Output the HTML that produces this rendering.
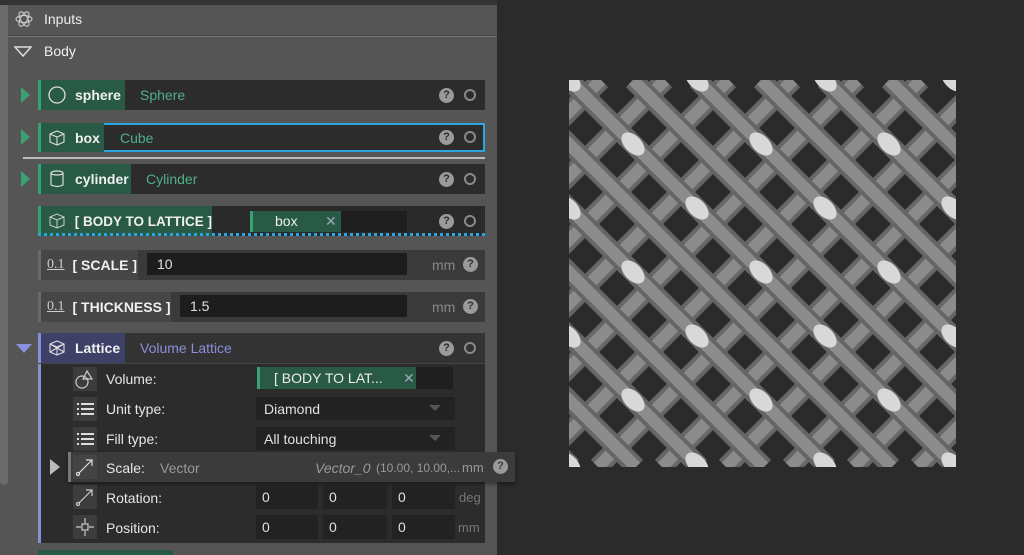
<!DOCTYPE html>
<html><head><meta charset="utf-8"><style>
*{margin:0;padding:0;box-sizing:border-box}
body{width:1024px;height:555px;overflow:hidden;background:#2b2b2b;font-family:"Liberation Sans",sans-serif;font-size:14px;color:#e8e8e8;position:relative}
.a{position:absolute}
.row{position:absolute;left:38px;width:447px;background:#2c2c2c}
.lbl{position:absolute;left:0;top:0;bottom:0;display:flex;align-items:center;font-weight:bold;color:#f0f0f0;white-space:nowrap}
.g{background:#285a45;border-left:3px solid #3aa175}
.gr{background:#464646;border-left:3px solid #6a6a6a}
.q{position:absolute;width:15px;height:15px;border-radius:50%;background:#9a9a9a;color:#2c2c2c;font-size:11px;font-weight:bold;text-align:center;line-height:15px}
.o{position:absolute;width:12px;height:12px;border-radius:50%;border:2px solid #8a8a8a}
.tri{position:absolute;width:0;height:0;border-top:8px solid transparent;border-bottom:8px solid transparent;border-left:9px solid #3aa175}
.in{position:absolute;background:#1d1d1d;color:#e0e0e0;display:flex;align-items:center;padding-left:10px}
.ic{position:absolute;width:24px;height:24px;background:#3c3c3c}
.sl{position:absolute;left:106px;color:#e6e6e6}
</style></head><body>
<div class="a" style="left:0;top:0;width:497px;height:555px;background:#555"></div>
<div class="a" style="left:0;top:0;width:497px;height:5px;background:#333"></div>
<div class="a" style="left:0;top:5px;width:8px;height:480px;background:#6b6b6b;border-radius:0 0 4px 4px"></div>
<div class="a" style="left:8px;top:36px;width:489px;height:1px;background:#777"></div>
<div class="a" style="left:8px;top:35px;width:489px;height:1px;background:#444"></div>
<svg class="a" style="left:14px;top:9px" width="20" height="20" viewBox="0 0 20 20" fill="none" stroke="#ccc" stroke-width="1.1"><ellipse cx="10" cy="10" rx="8" ry="3.5"/><ellipse cx="10" cy="10" rx="8" ry="3.5" transform="rotate(60 10 10)"/><ellipse cx="10" cy="10" rx="8" ry="3.5" transform="rotate(120 10 10)"/></svg>
<div class="a" style="left:44px;top:11px;color:#eee">Inputs</div>
<svg class="a" style="left:14px;top:46px" width="18" height="12"><path d="M1 1H17L9 10Z" fill="none" stroke="#ddd" stroke-width="1.5"/></svg>
<div class="a" style="left:44px;top:43px;color:#eee">Body</div>

<div class="tri" style="left:21px;top:87px"></div>
<div class="row" style="top:80px;height:30px"><div class="lbl g" style="width:87px"><svg style="margin-left:6px" width="20" height="20"><circle cx="10" cy="10" r="8" fill="none" stroke="#ddd" stroke-width="1.3"/></svg><span style="margin-left:8px">sphere</span></div><div class="a" style="left:102px;top:7px;color:#4fb08a">Sphere</div><div class="q" style="left:401px;top:8px">?</div><div class="o" style="left:426px;top:9px"></div></div>
<div class="tri" style="left:21px;top:129px"></div>
<div class="row" style="top:123px;height:29px;border:2px solid #2aa7e2"><div class="lbl g" style="width:66px;left:-2px;top:-2px;bottom:-2px"><svg style="margin-left:6px" width="20" height="20" fill="none" stroke="#ddd" stroke-width="1.1"><path d="M3 6L10 3L17 6V14L10 17L3 14Z M3 6L10 9L17 6 M10 9V17"/></svg><span style="margin-left:8px">box</span></div><div class="a" style="left:80px;top:5px;color:#4fb08a">Cube</div><div class="q" style="left:399px;top:5px">?</div><div class="o" style="left:424px;top:6px"></div></div>
<div class="a" style="left:23px;top:157px;width:462px;height:2px;background:#bbb"></div>
<div class="tri" style="left:21px;top:171px"></div>
<div class="row" style="top:164px;height:30px"><div class="lbl g" style="width:93px"><svg style="margin-left:6px" width="20" height="20" fill="none" stroke="#ddd" stroke-width="1.2"><ellipse cx="10" cy="4" rx="6" ry="2"/><path d="M4 4V16Q10 19 16 16V4"/></svg><span style="margin-left:8px">cylinder</span></div><div class="a" style="left:108px;top:7px;color:#4fb08a">Cylinder</div><div class="q" style="left:401px;top:8px">?</div><div class="o" style="left:426px;top:9px"></div></div>
<div class="row" style="top:206px;height:30px;background:#2a2a2a"><div class="lbl g" style="width:174px"><svg style="margin-left:6px" width="20" height="20" fill="none" stroke="#ccc" stroke-width="1"><path d="M3 6L10 3L17 6V14L10 17L3 14Z M3 6L10 9L17 6 M10 9V17"/></svg><span style="margin-left:8px;font-size:13.5px">[ BODY TO LATTICE ]</span></div>
<div class="a" style="left:212px;top:5px;width:157px;height:21px;background:#1f1f1f"></div>
<div class="a" style="left:212px;top:5px;width:91px;height:21px;background:#285a45;border-left:3px solid #3aa175;color:#eee;padding-left:22px;line-height:21px">box<span style="position:absolute;left:72px;color:#9ab">✕</span></div>
<div class="q" style="left:401px;top:8px">?</div><div class="o" style="left:426px;top:9px"></div>
<div class="a" style="left:0;top:27px;width:447px;height:0;border-top:3px dotted #2aa7e2"></div></div>
<div class="row" style="top:250px;height:30px;background:#3a3a3a"><div class="lbl gr" style="width:100px"><span style="margin-left:6px;font-family:'Liberation Serif';color:#ccc;font-weight:normal;text-decoration:underline">0.1</span><span style="margin-left:8px">[ SCALE ]</span></div><div class="in" style="left:109px;top:3px;width:260px;height:22px">10</div><div class="a" style="left:394px;top:7px;color:#888">mm</div><div class="q" style="left:425px;top:7px">?</div></div>
<div class="row" style="top:292px;height:30px;background:#3a3a3a"><div class="lbl gr" style="width:133px"><span style="margin-left:6px;font-family:'Liberation Serif';color:#ccc;font-weight:normal;text-decoration:underline">0.1</span><span style="margin-left:8px">[ THICKNESS ]</span></div><div class="in" style="left:142px;top:3px;width:227px;height:22px">1.5</div><div class="a" style="left:394px;top:7px;color:#888">mm</div><div class="q" style="left:425px;top:7px">?</div></div>
<svg class="a" style="left:16px;top:344px" width="16" height="10"><path d="M0 0H16L8 9Z" fill="#8a8fe0"/></svg>
<div class="row" style="top:333px;height:30px;background:#333"><div class="lbl" style="width:87px;background:#3d4168;border-left:3px solid #8a8fd8"><svg style="margin-left:6px" width="20" height="20" fill="none" stroke="#ddd" stroke-width="1.1"><path d="M3 6L10 3L17 6V14L10 17L3 14Z M3 6L10 9L17 6 M10 9V17 M3 6L17 14 M17 6L3 14"/></svg><span style="margin-left:8px">Lattice</span></div><div class="a" style="left:102px;top:7px;color:#8a8fd8">Volume Lattice</div><div class="q" style="left:401px;top:8px">?</div><div class="o" style="left:426px;top:9px"></div></div>
<div class="a" style="left:38px;top:363px;width:447px;height:180px;background:#2c2c2c;border-left:3px solid #8a8fd0"></div>
<div class="a" style="left:38px;top:363px;width:447px;height:1px;background:#444"></div>

<div class="ic" style="left:73px;top:367px"></div><svg class="a" style="left:73px;top:367px" width="24" height="24" fill="none" stroke="#ccc" stroke-width="1.2"><circle cx="9" cy="15" r="6"/><path d="M14 4L19 12H10Z"/></svg>
<div class="sl" style="top:371px">Volume:</div>
<div class="a" style="left:257px;top:367px;width:196px;height:22px;background:#1f1f1f"></div>
<div class="a" style="left:257px;top:367px;width:159px;height:22px;background:#285a45;border-left:3px solid #3aa175;padding-left:14px;line-height:22px;color:#eee">[ BODY TO LAT...<span style="position:absolute;left:143px;color:#9ab">✕</span></div>

<div class="ic" style="left:73px;top:397px"></div><svg class="a" style="left:77px;top:402px" width="18" height="14" fill="#ddd"><rect x="0" y="1" width="2" height="2"/><rect x="4" y="1" width="13" height="2"/><rect x="0" y="6" width="2" height="2"/><rect x="4" y="6" width="13" height="2"/><rect x="0" y="11" width="2" height="2"/><rect x="4" y="11" width="13" height="2"/></svg>
<div class="sl" style="top:401px">Unit type:</div>
<div class="in" style="left:256px;top:397px;width:199px;height:23px;background:#222;padding-left:8px">Diamond</div>
<svg class="a" style="left:429px;top:405px" width="12" height="6"><path d="M0 0H12L6 6Z" fill="#555"/></svg>

<div class="ic" style="left:73px;top:427px"></div><svg class="a" style="left:77px;top:432px" width="18" height="14" fill="#ddd"><rect x="0" y="1" width="2" height="2"/><rect x="4" y="1" width="13" height="2"/><rect x="0" y="6" width="2" height="2"/><rect x="4" y="6" width="13" height="2"/><rect x="0" y="11" width="2" height="2"/><rect x="4" y="11" width="13" height="2"/></svg>
<div class="sl" style="top:431px">Fill type:</div>
<div class="in" style="left:256px;top:427px;width:199px;height:23px;background:#222;padding-left:8px">All touching</div>
<svg class="a" style="left:429px;top:435px" width="12" height="6"><path d="M0 0H12L6 6Z" fill="#555"/></svg>

<div class="a" style="left:68px;top:452px;width:447px;height:30px;background:#3b3b3b;border-left:3px solid #777;box-shadow:0 2px 4px rgba(0,0,0,.4)"></div>
<svg class="a" style="left:50px;top:459px" width="10" height="16"><path d="M0 0L10 8L0 16Z" fill="#bbb"/></svg>
<div class="ic" style="left:73px;top:455px;background:#444"></div><svg class="a" style="left:73px;top:455px" width="24" height="24" fill="none" stroke="#ddd" stroke-width="1.2"><path d="M6 18L19 5M13 5H19V11"/><circle cx="5" cy="19" r="1.5"/></svg>
<div class="sl" style="top:460px">Scale:</div>
<div class="a" style="left:160px;top:460px;color:#999">Vector</div>
<div class="a" style="left:315px;top:460px;color:#999;font-style:italic">Vector_0</div>
<div class="a" style="left:376px;top:461px;color:#999;font-size:12px">(10.00, 10.00,...</div>
<div class="a" style="left:462px;top:460px;color:#999;font-size:13px">mm</div>
<div class="q" style="left:493px;top:459px;background:#999;color:#3b3b3b">?</div>

<div class="ic" style="left:73px;top:485px"></div><svg class="a" style="left:73px;top:485px" width="24" height="24" fill="none" stroke="#ccc" stroke-width="1.2"><path d="M6 18L19 5M13 5H19V11"/><circle cx="5" cy="19" r="1.5"/></svg>
<div class="sl" style="top:490px">Rotation:</div>
<div class="in" style="left:256px;top:485px;width:62px;height:24px;background:#222;padding-left:6px">0</div>
<div class="in" style="left:323px;top:485px;width:64px;height:24px;background:#222;padding-left:6px">0</div>
<div class="in" style="left:392px;top:485px;width:63px;height:24px;background:#222;padding-left:6px">0</div>
<div class="a" style="left:459px;top:490px;color:#777;font-size:13px">deg</div>

<div class="ic" style="left:73px;top:515px"></div><svg class="a" style="left:73px;top:515px" width="24" height="24" fill="none" stroke="#ccc" stroke-width="1.2"><path d="M12 3V8M12 16V21M3 12H8M16 12H21"/><rect x="9" y="9" width="6" height="6"/></svg>
<div class="sl" style="top:520px">Position:</div>
<div class="in" style="left:256px;top:515px;width:62px;height:24px;background:#222;padding-left:6px">0</div>
<div class="in" style="left:323px;top:515px;width:64px;height:24px;background:#222;padding-left:6px">0</div>
<div class="in" style="left:392px;top:515px;width:63px;height:24px;background:#222;padding-left:6px">0</div>
<div class="a" style="left:458px;top:520px;color:#777;font-size:13px">mm</div>
<div class="a" style="left:38px;top:550px;width:135px;height:5px;background:#285a45"></div>

<svg class="a" style="left:569px;top:80px" width="387" height="387" viewBox="0 0 387 387">
<defs><clipPath id="c"><rect width="387" height="387"/></clipPath></defs>
<g clip-path="url(#c)">
<g stroke="#666" stroke-width="20">
<path d="M32 0L-355 387M96 0L-291 387M160 0L-227 387M224 0L-163 387M288 0L-99 387M352 0L-35 387M416 0L29 387M480 0L93 387M544 0L157 387M608 0L221 387M672 0L285 387M736 0L349 387M800 0L413 387"/>
</g>
<g stroke="#8c8c8c" stroke-width="12">
<path d="M32 0L-355 387M96 0L-291 387M160 0L-227 387M224 0L-163 387M288 0L-99 387M352 0L-35 387M416 0L29 387M480 0L93 387M544 0L157 387M608 0L221 387M672 0L285 387M736 0L349 387M800 0L413 387"/>
</g>
<g stroke="#666" stroke-width="20">
<path d="M-384 0L3 387M-320 0L67 387M-256 0L131 387M-192 0L195 387M-128 0L259 387M-64 0L323 387M0 0L387 387M64 0L451 387M128 0L515 387M192 0L579 387M256 0L643 387M320 0L707 387"/>
</g>
<g stroke="#8c8c8c" stroke-width="12">
<path d="M-384 0L3 387M-320 0L67 387M-256 0L131 387M-192 0L195 387M-128 0L259 387M-64 0L323 387M0 0L387 387M64 0L451 387M128 0L515 387M192 0L579 387M256 0L643 387M320 0L707 387"/>
</g>
<g fill="#d8d8d8">
<ellipse cx="0" cy="0" rx="14" ry="8.5" transform="rotate(45 0 0)"/><ellipse cx="128" cy="0" rx="14" ry="8.5" transform="rotate(45 128 0)"/><ellipse cx="256" cy="0" rx="14" ry="8.5" transform="rotate(45 256 0)"/><ellipse cx="384" cy="0" rx="14" ry="8.5" transform="rotate(45 384 0)"/>
<ellipse cx="64" cy="64" rx="14" ry="8.5" transform="rotate(45 64 64)"/><ellipse cx="192" cy="64" rx="14" ry="8.5" transform="rotate(45 192 64)"/><ellipse cx="320" cy="64" rx="14" ry="8.5" transform="rotate(45 320 64)"/>
<ellipse cx="0" cy="128" rx="14" ry="8.5" transform="rotate(45 0 128)"/><ellipse cx="128" cy="128" rx="14" ry="8.5" transform="rotate(45 128 128)"/><ellipse cx="256" cy="128" rx="14" ry="8.5" transform="rotate(45 256 128)"/><ellipse cx="384" cy="128" rx="14" ry="8.5" transform="rotate(45 384 128)"/>
<ellipse cx="64" cy="192" rx="14" ry="8.5" transform="rotate(45 64 192)"/><ellipse cx="192" cy="192" rx="14" ry="8.5" transform="rotate(45 192 192)"/><ellipse cx="320" cy="192" rx="14" ry="8.5" transform="rotate(45 320 192)"/>
<ellipse cx="0" cy="256" rx="14" ry="8.5" transform="rotate(45 0 256)"/><ellipse cx="128" cy="256" rx="14" ry="8.5" transform="rotate(45 128 256)"/><ellipse cx="256" cy="256" rx="14" ry="8.5" transform="rotate(45 256 256)"/><ellipse cx="384" cy="256" rx="14" ry="8.5" transform="rotate(45 384 256)"/>
<ellipse cx="64" cy="320" rx="14" ry="8.5" transform="rotate(45 64 320)"/><ellipse cx="192" cy="320" rx="14" ry="8.5" transform="rotate(45 192 320)"/><ellipse cx="320" cy="320" rx="14" ry="8.5" transform="rotate(45 320 320)"/>
<ellipse cx="0" cy="384" rx="14" ry="8.5" transform="rotate(45 0 384)"/><ellipse cx="128" cy="384" rx="14" ry="8.5" transform="rotate(45 128 384)"/><ellipse cx="256" cy="384" rx="14" ry="8.5" transform="rotate(45 256 384)"/><ellipse cx="384" cy="384" rx="14" ry="8.5" transform="rotate(45 384 384)"/>
</g></g></svg>
</body></html>
